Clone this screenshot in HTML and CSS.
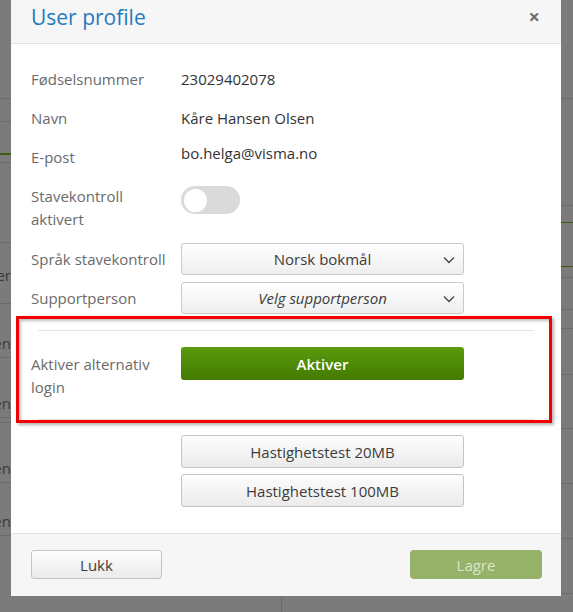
FILE: index.html
```html
<!DOCTYPE html>
<html lang="no">
<head>
  <meta charset="UTF-8" />
  <meta name="viewport" content="width=device-width, initial-scale=1" />
  <title>User profile</title>
  <link rel="stylesheet" href="styles.css">
</head>
<body>
  <div class="backdrop">
    <div class="bg-col bg-left">
      <div class="bg-row"></div>
      <div class="bg-row"></div>
      <div class="bg-row green"></div>
      <div class="bg-row"></div>
      <div class="bg-row"></div>
      <div class="bg-row text high"><div class="peek">Leder</div></div>
      <div class="bg-row text"><div class="peek">Enhetsleder en</div></div>
      <div class="bg-row text"><div class="peek">Enhetsleder en</div></div>
      <div class="bg-row"></div>
      <div class="bg-row text"><div class="peek">Enhetsleder en</div></div>
      <div class="bg-row text"><div class="peek">Enhetsleder en</div></div>
    </div>
    <div class="bg-col bg-right">
      <div class="bg-row"></div>
      <div class="bg-row"></div>
      <div class="bg-row green"></div>
      <div class="bg-row green"></div>
      <div class="bg-row"></div>
      <div class="bg-row"></div>
      <div class="bg-row"></div>
      <div class="bg-row"></div>
      <div class="bg-row"></div>
      <div class="bg-row"></div>
      <div class="bg-row"></div>
      <div class="bg-row"></div>
    </div>
  </div>

  <div class="modal">
    <div class="modal-header">
      <h2>User profile</h2>
      <button class="close">&times;</button>
    </div>

    <div class="modal-body">
      <div class="field">
        <span class="label">Fødselsnummer</span>
        <span class="value">23029402078</span>
      </div>
      <div class="field">
        <span class="label">Navn</span>
        <span class="value">Kåre Hansen Olsen</span>
      </div>
      <div class="field">
        <span class="label">E-post</span>
        <span class="value raised">bo.helga@visma.no</span>
      </div>
      <div class="field">
        <span class="label">Stavekontroll<br>aktivert</span>
        <span class="toggle"><span class="knob"></span></span>
      </div>
      <div class="field field-select first">
        <span class="label">Språk stavekontroll</span>
        <div class="select">
          Norsk bokmål
          <svg class="chevron" width="12" height="8" viewBox="0 0 12 8"><path d="M1 1.5 6 6.5 11 1.5" fill="none" stroke="#444" stroke-width="1.3"/></svg>
        </div>
      </div>
      <div class="field field-select">
        <span class="label">Supportperson</span>
        <div class="select placeholder">
          Velg supportperson
          <svg class="chevron" width="12" height="8" viewBox="0 0 12 8"><path d="M1 1.5 6 6.5 11 1.5" fill="none" stroke="#444" stroke-width="1.3"/></svg>
        </div>
      </div>

      <div class="section">
        <hr>
        <div class="field field-action">
          <span class="label">Aktiver alternativ<br>login</span>
          <button class="btn btn-green">Aktiver</button>
        </div>
        <hr>
        <div class="annotation"></div>
      </div>

      <div class="speed-tests">
        <button class="btn">Hastighetstest 20MB</button>
        <button class="btn">Hastighetstest 100MB</button>
      </div>
    </div>

    <div class="modal-footer">
      <button class="btn btn-small">Lukk</button>
      <button class="btn btn-save">Lagre</button>
    </div>
  </div>
</body>
</html>
```

FILE: styles.css
```css
*, *::before, *::after {
  box-sizing: border-box;
}
body {
  margin: 0;
  height: 612px;
  overflow: hidden;
  background: #7b7b7b;
  font-family: 'Open Sans', 'Noto Sans', sans-serif;
  font-size: 15px;
  color: #333;
}

/* page behind the dialog */
.backdrop {
  display: flex;
  height: 100%;
}
.bg-col {
  display: flex;
  flex-direction: column;
}
.bg-left {
  width: 282px;
  border-right: 1px solid #6c6c6c;
}
.bg-right {
  flex: 1;
}
.bg-row {
  border-bottom: 1px solid #6c6c6c;
  flex: none;
}
.bg-row.green {
  border-bottom: 1px solid #3c5a12;
}
.bg-left .bg-row.green {
  border-bottom-width: 2px;
}
.bg-row.text {
  display: flex;
  align-items: flex-end;
  padding-bottom: 4px;
}
.bg-row.text.high {
  padding-bottom: 18px;
}
.peek {
  width: 11px;
  overflow: hidden;
  display: flex;
  justify-content: flex-end;
  white-space: nowrap;
  color: #3a3a3a;
  line-height: 20px;
}
.bg-left .bg-row:nth-child(1) { height: 99px; }
.bg-left .bg-row:nth-child(2) { height: 23px; }
.bg-left .bg-row:nth-child(3) { height: 33px; }
.bg-left .bg-row:nth-child(4) { height: 8px; }
.bg-left .bg-row:nth-child(5) { height: 80px; }
.bg-left .bg-row:nth-child(6) { height: 61px; }
.bg-left .bg-row:nth-child(7) { height: 54px; }
.bg-left .bg-row:nth-child(8) { height: 60px; }
.bg-left .bg-row:nth-child(9) { height: 5px; }
.bg-left .bg-row:nth-child(10) { height: 60px; }
.bg-left .bg-row:nth-child(11) { height: 53px; }

.bg-right .bg-row:nth-child(1) { height: 99px; }
.bg-right .bg-row:nth-child(2) { height: 107px; }
.bg-right .bg-row:nth-child(3) { height: 17px; }
.bg-right .bg-row:nth-child(4) { height: 44px; }
.bg-right .bg-row:nth-child(5) { height: 11px; }
.bg-right .bg-row:nth-child(6) { height: 32px; }
.bg-right .bg-row:nth-child(7) { height: 19px; }
.bg-right .bg-row:nth-child(8) { height: 46px; }
.bg-right .bg-row:nth-child(9) { height: 54px; }
.bg-right .bg-row:nth-child(10) { height: 55px; }
.bg-right .bg-row:nth-child(11) { height: 55px; }
.bg-right .bg-row:nth-child(12) { height: 55px; }

/* dialog */
.modal {
  position: fixed;
  top: 0;
  left: 11px;
  width: 550px;
  background: white;
}
.modal-header {
  height: 44px;
  display: flex;
  align-items: flex-start;
  justify-content: space-between;
  padding: 3px 20px 0 20px;
  background: #f6f6f6;
  border-bottom: 1px solid #e1e1e1;
}
.modal-header h2 {
  margin: 0;
  font-size: 21px;
  font-weight: 400;
  line-height: 28px;
  color: #1f7bbf;
}
.close {
  border: none;
  background: none;
  padding: 0;
  font-family: inherit;
  font-size: 20px;
  font-weight: 700;
  line-height: 28px;
  color: #6e6e6e;
  margin-right: 1px;
}

.modal-body {
  padding: 24px 20px 26px 20px;
}
.field {
  display: grid;
  grid-template-columns: 150px 283px;
  line-height: 23px;
  margin-bottom: 16px;
}
.label {
  color: #6b6b6b;
  white-space: nowrap;
}
.value {
  color: #333;
}
.value.raised {
  margin-top: -4px;
}
.toggle {
  display: flex;
  align-items: center;
  width: 59px;
  height: 28px;
  margin-top: 1px;
  padding: 0 3px;
  border-radius: 14px;
  background: #dadada;
}
.knob {
  width: 23px;
  height: 23px;
  border-radius: 50%;
  background: white;
}

.field-select {
  align-items: center;
  margin-bottom: 7px;
}
.field-select.first {
  margin-top: -4px;
}
.select {
  position: relative;
  height: 32px;
  line-height: 30px;
  text-align: center;
  color: #3c3c3c;
  border: 1px solid #c9c9c9;
  border-radius: 3px;
  background: linear-gradient(#ffffff, #eeeeee);
}
.select.placeholder {
  font-style: italic;
}
.chevron {
  position: absolute;
  right: 8px;
  top: 12px;
}

.section {
  position: relative;
  margin-top: -6px;
  padding-top: 15px;
}
.section hr {
  margin: 0 7px;
  border: none;
  border-top: 1px solid #e3e3e3;
}
.field-action {
  margin: 16px 0 20px 0;
}
.field-action .label {
  padding-top: 6px;
}
.annotation {
  position: absolute;
  top: 1px;
  left: -15px;
  right: -11px;
  bottom: -3px;
  border: 3px solid #f00000;
  box-shadow: 2px 2px 3px rgba(0, 0, 0, 0.3), inset 2px 2px 3px rgba(0, 0, 0, 0.25);
}

.btn {
  font-family: inherit;
  font-size: 15px;
  color: #3c3c3c;
  height: 32px;
  padding: 0;
  border: 1px solid #c4c4c4;
  border-radius: 3px;
  background: linear-gradient(#fdfdfd, #ebebeb);
  cursor: pointer;
}
.btn-green {
  height: 33px;
  border: none;
  font-weight: 600;
  color: white;
  background: linear-gradient(#5a9b0c, #447a02);
}
.speed-tests {
  display: flex;
  flex-direction: column;
  gap: 6px;
  margin-top: 15px;
  margin-left: 150px;
  width: 283px;
}
.speed-tests .btn {
  height: 33px;
}

.modal-footer {
  display: flex;
  justify-content: space-between;
  padding: 16px 19px 17px 20px;
  background: #f6f6f6;
  border-top: 1px solid #e1e1e1;
}
.btn-small {
  width: 131px;
  height: 29px;
}
.btn-save {
  width: 132px;
  height: 29px;
  border: none;
  border-radius: 4px;
  background: #96b26a;
  color: #d9e5c6;
}
```
